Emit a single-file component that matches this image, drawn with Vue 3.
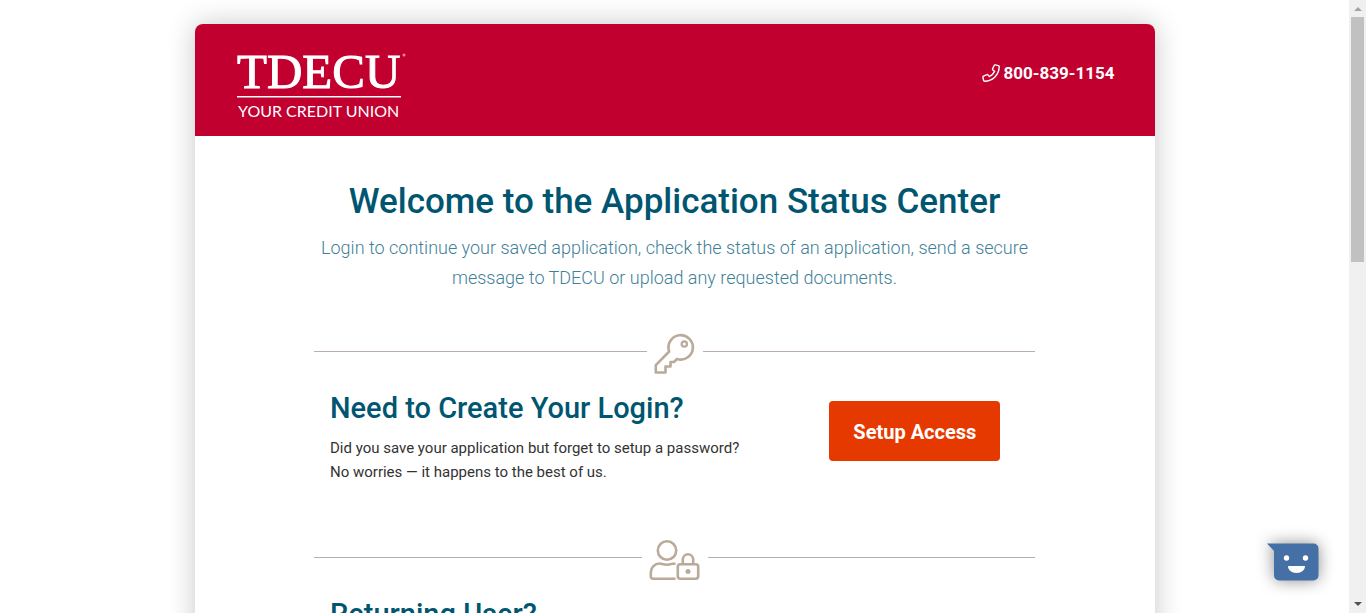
<script setup>
const sections = [
  {
    icon: 'key',
    title: 'Need to Create Your Login?',
    lines: ['Did you save your application but forget to setup a password?', 'No worries — it happens to the best of us.'],
    action: 'Setup Access',
  },
  { icon: 'user', title: 'Returning User?', lines: [], action: '' },
]
</script>

<template>
  <div class="page">
    <div class="viewport">
      <div class="card">
        <header class="top">
          <svg class="logo" viewBox="0 0 170 68" width="170" height="68" role="img" aria-label="TDECU Your Credit Union">
            <text class="brand" x="0" y="36">TDECU</text>
            <circle cx="167" cy="3" r="1.5" fill="#e08a9b" />
            <rect x="0" y="44" width="164" height="1.5" fill="#fff" />
            <text class="tag" x="1" y="65">YOUR CREDIT UNION</text>
          </svg>
          <a class="phone" href="tel:8008391154">
            <svg viewBox="0 0 18 18" width="18" height="18" fill="none" stroke="#fff" stroke-width="1.4" stroke-linejoin="round">
              <path d="M13.2.9l3.2.7c.5.1.8.5.8 1C17.200 10.700 10.700 17.200 2.600 17.200c-.5 0-.9-.3-1-.8l-.7-3.200c-.1-.5.1-.9.6-1.100l3.400-1.500c.4-.2.8-.1 1.100.3l1.400 1.700c2.300-1.100 4.100-2.900 5.200-5.200l-1.700-1.400c-.4-.3-.5-.7-.3-1.100l1.500-3.400c.2-.5.6-.7 1.100-.6z" />
            </svg>
            <span>800-839-1154</span>
          </a>
        </header>
        <main class="body">
          <h1>Welcome to the Application Status Center</h1>
          <p class="lead">Login to continue your saved application, check the status of an application, send a secure<br />message to TDECU or upload any requested documents.</p>
          <section v-for="s in sections" :key="s.title">
            <div class="divider">
              <svg v-if="s.icon === 'key'" viewBox="0 0 40 40" width="40" height="40" fill="none" stroke="#b9aa9a" stroke-width="2.6" stroke-linejoin="round">
                <path d="M14.200 17.500A12.200 12.200 0 1 1 22 25L19 28H15.500V32.500H10.500V38.500H.8V31.200Z" />
                <circle cx="29.300" cy="10" r="2.700" stroke-width="2.200" />
              </svg>
              <svg v-else viewBox="0 0 50 40" width="50" height="40" fill="none" stroke="#b9aa9a" stroke-width="2.600" stroke-linecap="round" stroke-linejoin="round">
                <circle cx="17" cy="10.500" r="9.200" />
                <path d="M24.500 23.800c-2.400-.6-3.500.9-7.500.9s-5-1.200-7.500-1.200c-4.700 0-8.700 4-8.700 8.700v4c0 1.400 1.100 2.500 2.500 2.500H24.500" />
                <rect x="27.800" y="24.300" width="20.400" height="14.400" rx="2.400" />
                <path d="M32.800 24v-4.500a5.200 5.200 0 0 1 10.400 0V24" />
                <circle cx="38" cy="31.500" r="2.500" fill="#b9aa9a" stroke="none" />
              </svg>
            </div>
            <div class="row">
              <div class="copy">
                <h2>{{ s.title }}</h2>
                <p v-for="line in s.lines" :key="line">{{ line }}</p>
              </div>
              <button v-if="s.action" type="button" class="cta">{{ s.action }}</button>
            </div>
          </section>
        </main>
      </div>
    </div>
    <div class="scrollbar" aria-hidden="true">
      <i class="arrow up"></i>
      <i class="thumb"></i>
      <i class="arrow down"></i>
    </div>
    <button type="button" class="chat" aria-label="Chat">
      <svg viewBox="0 0 52 38" width="52" height="38">
        <path d="M0 .5H46.500a5 5 0 0 1 5 5V32.500a5 5 0 0 1-5 5H12a5 5 0 0 1-5-5V8Z" fill="#4470a5" />
        <circle cx="19.500" cy="15" r="2.700" fill="#fff" />
        <circle cx="38.500" cy="15" r="2.700" fill="#fff" />
        <path d="M21 23H38c0 4-3.500 7-8.500 7S21 27 21 23Z" fill="#fff" />
      </svg>
    </button>
  </div>
</template>

<style>
body {
  background: #fff;
  overflow: hidden;
}
</style>

<style scoped>
.page {
  display: flex;
  height: 100vh;
  overflow: hidden;
  font-family: Roboto, "Open Sans", sans-serif;
}
.viewport {
  flex: 1;
  min-width: 0;
  overflow: hidden;
  padding: 24px 24px 0;
}
.card {
  max-width: 960px;
  min-height: 100vh;
  margin: 0 auto;
  border-radius: 8px;
  background: #fff;
  box-shadow: 0 0 28px rgba(0, 0, 0, 0.22);
}
.top {
  display: flex;
  justify-content: space-between;
  align-items: flex-start;
  height: 112px;
  padding: 28px 40px 0 42px;
  box-sizing: border-box;
  border-radius: 8px 8px 0 0;
  background: #c1002f;
}
.logo {
  overflow: visible;
}
.brand {
  font: 49px "Liberation Serif", serif;
  fill: #fff;
  stroke: #fff;
  stroke-width: 1px;
}
.tag {
  font: 16px Lato, sans-serif;
  fill: #fff;
}
.phone {
  display: flex;
  align-items: center;
  gap: 4px;
  margin-top: 9px;
  color: #fff;
  font: 700 17px/24px Roboto, sans-serif;
  text-decoration: none;
}
.body {
  max-width: 721px;
  margin: 0 auto;
  padding-top: 40px;
}
h1,
h2,
p {
  margin: 0;
}
h1 {
  color: #005670;
  font: 500 35px/52px Roboto, sans-serif;
  text-align: center;
  white-space: nowrap;
}
.lead {
  margin: 5px 0 41px;
  color: #3f7f98;
  font: 300 18px/30px Roboto, sans-serif;
  text-align: center;
}
.divider {
  display: flex;
  gap: 8px;
  height: 40px;
}
.divider svg {
  overflow: visible;
}
.divider::before,
.divider::after {
  content: "";
  flex: 1;
  height: 1px;
  margin-top: 17px;
  background: #b9aeaa;
}
.row {
  display: grid;
  grid-template-columns: 2fr 1fr;
  align-items: start;
  padding: 14px 0 56px;
}
.copy {
  padding: 0 16px;
}
h2 {
  margin-bottom: 8px;
  color: #005670;
  font: 500 29px/40px Roboto, sans-serif;
}
.copy p {
  color: #333;
  font: 400 15px/24px Roboto, sans-serif;
  white-space: nowrap;
}
.cta {
  justify-self: center;
  width: 171px;
  height: 60px;
  margin-top: 13px;
  padding: 2px 0 0;
  border: 0;
  border-radius: 4px;
  background: #e63900;
  color: #fff;
  font: 700 20px/24px Roboto, sans-serif;
}
.scrollbar {
  display: flex;
  flex-direction: column;
  align-items: center;
  width: 17px;
  background: #f0f0f0;
}
.thumb {
  width: 13px;
  height: 40%;
  margin-top: 6px;
  background: #c1c1c1;
}
.arrow {
  border: 4px solid transparent;
}
.up {
  margin-top: 3px;
  border-bottom-color: #a3a3a3;
}
.down {
  margin: auto 0 3px;
  border-top-color: #505050;
}
.chat {
  position: fixed;
  right: 47px;
  bottom: 32px;
  padding: 0;
  border: 0;
  background: none;
  line-height: 0;
}
.chat svg {
  overflow: visible;
  filter: drop-shadow(0 0 8px rgba(0, 0, 0, 0.45));
}
</style>
